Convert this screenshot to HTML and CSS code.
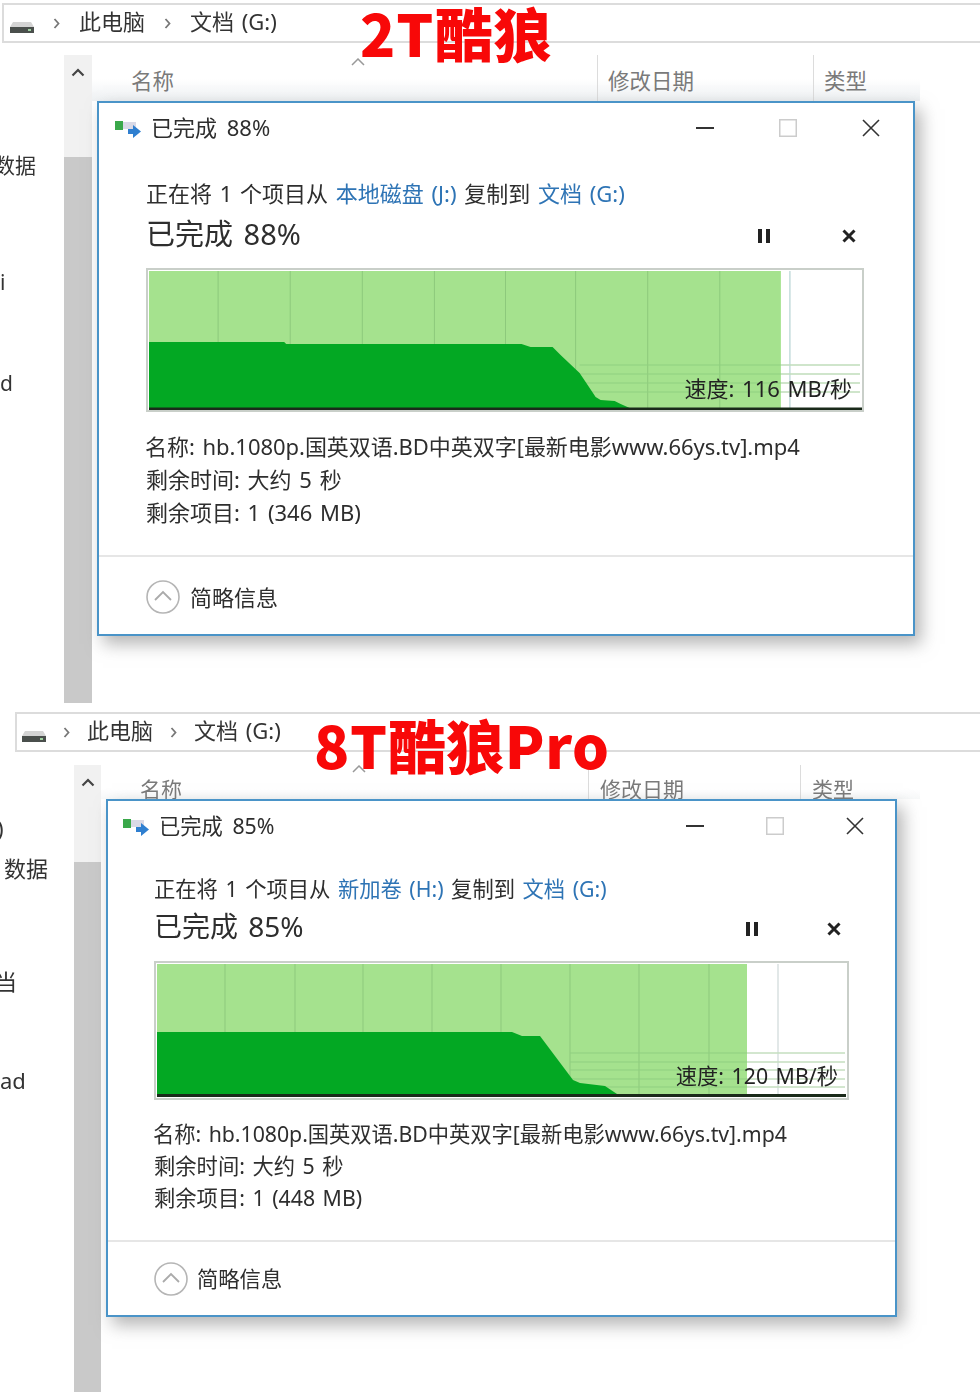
FILE: index.html
```html
<!DOCTYPE html>
<html lang="zh-CN">
<head>
<meta charset="utf-8">
<title>2T酷狼 / 8T酷狼Pro</title>
<link rel="stylesheet" href="styles.css">
</head>
<body>
<section class="shot shot-a">
  <div class="addr">
    <svg class="drive" viewBox="0 0 24 11"><path d="M3 0h18l3 5H0z" fill="#d4d4d4"/><rect y="5" width="24" height="6" fill="#4a4f4c"/><rect x="18" y="7" width="3" height="2" fill="#9fd0a0"/></svg>
    <svg class="crumb" viewBox="0 0 7 11"><path d="M1.500 1l4 4.500-4 4.500" fill="none" stroke="#777" stroke-width="1.800"/></svg>
    <span class="addr-text">此电脑</span>
    <svg class="crumb" viewBox="0 0 7 11"><path d="M1.500 1l4 4.500-4 4.500" fill="none" stroke="#777" stroke-width="1.800"/></svg>
    <span class="addr-text">文档 (G:)</span>
  </div>
  <div class="explorer">
    <div class="nav">
      <span class="nav-item n1">数据</span>
      <span class="nav-item n2">i</span>
      <span class="nav-item n3">d</span>
    </div>
    <div class="scroll">
      <div class="scroll-track"><svg class="scroll-up" viewBox="0 0 14 9"><path d="M1.500 7.500L7 2l5.500 5.500" fill="none" stroke="#444" stroke-width="2.200"/></svg></div>
      <div class="scroll-thumb"></div>
    </div>
    <div class="columns">
      <span class="col col-name">名称</span>
      <span class="col col-date">修改日期</span>
      <span class="col col-type">类型</span>
    </div>
  </div>
  <svg class="sort" viewBox="0 0 14 8"><path d="M1 7l6-6 6 6" fill="none" stroke="#999" stroke-width="1.500"/></svg>
  <h1 class="label">2T酷狼</h1>

  <div class="dialog">
    <div class="titlebar">
      <svg class="copy" viewBox="0 0 26 19"><rect y="2" width="8" height="9" fill="#3aa84a"/><path d="M8 3h13v7H8z" fill="#d9d9e6"/><path d="M13 10h5V6l8 6.500-8 6.500v-4h-5z" fill="#2f7fd0"/></svg>
      <span class="title-text">已完成 88%</span>
      <div class="controls">
        <svg class="ctl" viewBox="0 0 18 18"><path d="M0 9h18" stroke="#333" stroke-width="2"/></svg>
        <svg class="ctl" viewBox="0 0 18 18"><rect x=".75" y=".75" width="16.500" height="16.500" fill="none" stroke="#ccc" stroke-width="1.500"/></svg>
        <svg class="ctl" viewBox="0 0 18 18"><path d="M1 1l16 16M17 1L1 17" stroke="#333" stroke-width="1.600"/></svg>
      </div>
    </div>
    <p class="from">正在将 1 个项目从 <a class="link">本地磁盘 (J:)</a> 复制到 <a class="link">文档 (G:)</a></p>
    <div class="heading">
      <span class="heading-text">已完成 88%</span>
      <div class="actions">
        <svg class="act" viewBox="0 0 14 14"><path d="M1 0h4v14H1zM9 0h4v14H9z" fill="#222"/></svg>
        <svg class="act" viewBox="0 0 14 14"><path d="M1.500 1.500l11 11M12.500 1.500l-11 11" stroke="#222" stroke-width="3"/></svg>
      </div>
    </div>
    <div class="graph">
      <svg class="chart" viewBox="0 0 713 140" preserveAspectRatio="none">
        <rect x="1" y="1" width="631" height="137" fill="#a5e28e"/>
        <path d="M70 1v137M142 1v137M214 1v137M286 1v137M357 1v137M427 1v137M499 1v137M571 1v137" stroke="#8dc97c" stroke-width="1"/>
        <path d="M641 1v137" stroke="#c4dcdc" stroke-width="1.500"/>
        <path d="M431 95H711M431 104H711M431 113H711M431 122H711" stroke="#8fcf80" stroke-width="1"/>
        <path d="M632 95H711M632 104H711M632 113H711M632 122H711" stroke="#d8e4d8" stroke-width="1"/>
        <path d="M1 72H136L138 74H373L382 77H404L412 85L431 103L447 127L452 130L466 131L472 134L481 138H1z" fill="#03a823"/>
        <rect x="1" y="137.500" width="712" height="2.500" fill="#1a2a1a"/>
      </svg>
      <span class="speed">速度: 116 MB/秒</span>
    </div>
    <div class="info">
      <p>名称: hb.1080p.国英双语.BD中英双字[最新电影www.66ys.tv].mp4</p>
      <p>剩余时间: 大约 5 秒</p>
      <p>剩余项目: 1 (346 MB)</p>
    </div>
    <div class="footer">
      <svg class="toggle" viewBox="0 0 34 34"><circle cx="17" cy="17" r="16" fill="#fff" stroke="#b5b5b5" stroke-width="1.600"/><path d="M9 20l8-8 8 8" fill="none" stroke="#aaa" stroke-width="1.800"/></svg>
      <span class="footer-text">简略信息</span>
    </div>
  </div>
</section>

<section class="shot shot-b">
  <div class="addr">
    <svg class="drive" viewBox="0 0 24 11"><path d="M3 0h18l3 5H0z" fill="#d4d4d4"/><rect y="5" width="24" height="6" fill="#4a4f4c"/><rect x="18" y="7" width="3" height="2" fill="#9fd0a0"/></svg>
    <svg class="crumb" viewBox="0 0 7 11"><path d="M1.500 1l4 4.500-4 4.500" fill="none" stroke="#777" stroke-width="1.800"/></svg>
    <span class="addr-text">此电脑</span>
    <svg class="crumb" viewBox="0 0 7 11"><path d="M1.500 1l4 4.500-4 4.500" fill="none" stroke="#777" stroke-width="1.800"/></svg>
    <span class="addr-text">文档 (G:)</span>
  </div>
  <div class="explorer">
    <div class="nav">
      <span class="nav-item n0">)</span>
      <span class="nav-item n1">数据</span>
      <span class="nav-item n2">当</span>
      <span class="nav-item n3">ad</span>
    </div>
    <div class="scroll">
      <div class="scroll-track"><svg class="scroll-up" viewBox="0 0 14 9"><path d="M1.500 7.500L7 2l5.500 5.500" fill="none" stroke="#444" stroke-width="2.200"/></svg></div>
      <div class="scroll-thumb"></div>
    </div>
    <div class="columns">
      <span class="col col-name">名称</span>
      <span class="col col-date">修改日期</span>
      <span class="col col-type">类型</span>
    </div>
  </div>
  <svg class="sort" viewBox="0 0 14 8"><path d="M1 7l6-6 6 6" fill="none" stroke="#999" stroke-width="1.500"/></svg>
  <h1 class="label">8T酷狼Pro</h1>

  <div class="dialog">
    <div class="titlebar">
      <svg class="copy" viewBox="0 0 26 19"><rect y="2" width="8" height="9" fill="#3aa84a"/><path d="M8 3h13v7H8z" fill="#d9d9e6"/><path d="M13 10h5V6l8 6.500-8 6.500v-4h-5z" fill="#2f7fd0"/></svg>
      <span class="title-text">已完成 85%</span>
      <div class="controls">
        <svg class="ctl" viewBox="0 0 18 18"><path d="M0 9h18" stroke="#333" stroke-width="2"/></svg>
        <svg class="ctl" viewBox="0 0 18 18"><rect x=".75" y=".75" width="16.500" height="16.500" fill="none" stroke="#ccc" stroke-width="1.500"/></svg>
        <svg class="ctl" viewBox="0 0 18 18"><path d="M1 1l16 16M17 1L1 17" stroke="#333" stroke-width="1.600"/></svg>
      </div>
    </div>
    <p class="from">正在将 1 个项目从 <a class="link">新加卷 (H:)</a> 复制到 <a class="link">文档 (G:)</a></p>
    <div class="heading">
      <span class="heading-text">已完成 85%</span>
      <div class="actions">
        <svg class="act" viewBox="0 0 14 14"><path d="M1 0h4v14H1zM9 0h4v14H9z" fill="#222"/></svg>
        <svg class="act" viewBox="0 0 14 14"><path d="M1.500 1.500l11 11M12.500 1.500l-11 11" stroke="#222" stroke-width="3"/></svg>
      </div>
    </div>
    <div class="graph">
      <svg class="chart" viewBox="0 0 691 135" preserveAspectRatio="none">
        <rect x="1" y="1" width="590" height="130" fill="#a5e28e"/>
        <path d="M69 1v130M139 1v130M207 1v130M276 1v130M345 1v130M414 1v130M483 1v130M553 1v130" stroke="#8dc97c" stroke-width="1"/>
        <path d="M622 1v130" stroke="#d8e0e0" stroke-width="1.500"/>
        <path d="M414 90H689M414 99H689M414 107H689M414 116H689M414 124H689" stroke="#8fcf80" stroke-width="1"/>
        <path d="M591 90H689M591 99H689M591 107H689M591 116H689M591 124H689" stroke="#dfe6df" stroke-width="1"/>
        <path d="M1 69H356L366 73H384L417 117L424 120L449 123L461 131H1z" fill="#03a823"/>
        <rect x="1" y="131" width="689" height="3" fill="#1a2a1a"/>
      </svg>
      <span class="speed">速度: 120 MB/秒</span>
    </div>
    <div class="info">
      <p>名称: hb.1080p.国英双语.BD中英双字[最新电影www.66ys.tv].mp4</p>
      <p>剩余时间: 大约 5 秒</p>
      <p>剩余项目: 1 (448 MB)</p>
    </div>
    <div class="footer">
      <svg class="toggle" viewBox="0 0 34 34"><circle cx="17" cy="17" r="16" fill="#fff" stroke="#b5b5b5" stroke-width="1.600"/><path d="M9 20l8-8 8 8" fill="none" stroke="#aaa" stroke-width="1.800"/></svg>
      <span class="footer-text">简略信息</span>
    </div>
  </div>
</section>
</body>
</html>
```

FILE: styles.css
```css
* { box-sizing: border-box; }

html, body { margin: 0; padding: 0; background: #fff; }

body {
  font-family: "Noto Sans", "Noto Sans CJK SC", sans-serif;
  color: #2e2e2e;
  overflow: hidden;
  word-spacing: 2px;
}

p, h1 { margin: 0; font-weight: 400; }

.shot {
  position: relative;
  overflow: hidden;
  display: flex;
  flex-direction: column;
}

.shot-a { height: 703px; padding: 3px 0 0 2px; --gap: 19px; }
.shot-b { height: 689px; padding: 9px 0 0 15px; --gap: 17px; }

/* the reference is a soft, upscaled photo of a screen */
.addr, .explorer, .dialog { filter: blur(.4px); }

/* address bar */
.addr {
  display: flex;
  align-items: center;
  gap: var(--gap);
  height: 40px;
  border: 2px solid #dcdcdc;
  border-right: 0;
  font-size: 22px;
  color: #333;
}
.shot-a .addr { padding: 0 0 0 6px; }
.shot-b .addr { padding: 0 0 0 5px; }
.addr-text { margin-bottom: 6px; }
.drive { width: 24px; height: 11px; margin-top: 8px; }
.crumb { width: 7px; height: 11px; }

/* explorer behind the dialog */
.explorer { display: flex; flex: 1; min-height: 0; }
.shot-a .explorer { margin: 12px 0 0 -2px; }
.shot-b .explorer { margin: 13px 0 0 -15px; }

.nav {
  display: grid;
  overflow: hidden;
  font-size: 21px;
  color: #333;
}
.shot-a .nav { width: 64px; grid-template-rows: 124px 117px 101px 1fr; }
.shot-b .nav { width: 74px; grid-template-rows: 77px 40px 113px 99px 1fr; font-size: 22px; }
.nav-item { align-self: end; line-height: 28px; justify-self: start; }
.shot-a .n1 { margin-left: -6px; }
.shot-b .n0 { margin-left: -3px; }
.shot-b .n1 { margin-left: 4px; }
.shot-b .n2 { margin-left: -5px; }

.scroll { display: flex; flex-direction: column; width: 28px; }
.shot-b .scroll { width: 27px; }
.scroll-track {
  display: flex;
  justify-content: center;
  padding-top: 13px;
  background: #f1f1f1;
}
.shot-a .scroll-track { height: 102px; }
.shot-b .scroll-track { height: 97px; }
.scroll-up { width: 14px; height: 9px; }
.scroll-thumb { flex: 1; background: #c9c9c9; }

.columns {
  display: flex;
  flex: 1;
  margin-right: 60px;
  font-size: 21.500px;
  color: #7a7a7a;
  background: linear-gradient(#fff 0, #fff 24px, #eef1f3 46px);
}
.shot-a .columns { height: 46px; padding: 0 0 0 39px; }
.shot-b .columns { height: 34px; padding: 0 0 0 39px; font-size: 21px; }
.col { line-height: 30px; }
.shot-a .col { padding-top: 11px; }
.shot-b .col { padding-top: 9px; }
.col-date, .col-type { border-left: 1px solid #dcdcdc; padding-left: 10px; }
.shot-b .col-date, .shot-b .col-type { padding-left: 11px; }
.shot-a .col-name { width: 466px; }
.shot-a .col-date { width: 216px; }
.shot-b .col-name { width: 448px; }
.shot-b .col-date { width: 212px; }

.sort { position: absolute; width: 14px; height: 8px; }
.shot-a .sort { left: 351px; top: 58px; }
.shot-b .sort { left: 352px; top: 62px; }

/* red captions over the screenshots */
.label {
  position: absolute;
  color: #f80808;
  font-family: "Noto Sans CJK SC", sans-serif;
  font-weight: 900;
  white-space: nowrap;
  line-height: 60px;
  word-spacing: 0;
}
.shot-a .label { left: 360px; top: 2px; font-size: 58px; letter-spacing: 1px; }
.shot-b .label { left: 314px; top: 11px; font-size: 58px; letter-spacing: .6px; }

/* copy dialog */
.dialog {
  position: absolute;
  display: flex;
  flex-direction: column;
  background: #fff;
  border: 2px solid #4a94c8;
  box-shadow: 6px 8px 16px rgba(120, 120, 120, .55);
}
.shot-a .dialog {
  left: 97px; top: 101px; width: 818px; height: 535px;
  --body-l: 47px; --graph-r: 49px;
  font-size: 22px; --lh: 33px;
}
.shot-b .dialog {
  left: 106px; top: 96px; width: 791px; height: 518px;
  --body-l: 46px; --graph-r: 46px;
  font-size: 21.300px; --lh: 32px;
}

.titlebar { display: flex; align-items: center; height: 50px; flex: none; }
.shot-a .titlebar { padding: 0 33px 0 16px; }
.shot-b .titlebar { padding: 0 31px 0 15px; }
.copy { width: 26px; height: 19px; margin-right: 10px; }
.title-text { margin-bottom: 4px; word-spacing: 4px; }
.controls { display: flex; margin-left: auto; }
.shot-a .controls { gap: 65px; }
.shot-b .controls { gap: 62px; }
.ctl { width: 18px; height: 18px; }

.from {
  line-height: var(--lh);
  padding-left: var(--body-l);
  white-space: nowrap;
}
.shot-a .from { margin-top: 24px; }
.shot-b .from { margin-top: 22px; }
.link { color: #2e74b5; }

.heading {
  display: flex;
  align-items: center;
  height: 40px;
  flex: none;
  padding: 0 calc(var(--graph-r) + 8px) 0 var(--body-l);
}
.shot-a .heading { margin-top: 4px; font-size: 29px; }
.shot-b .heading { margin-top: 2px; font-size: 28px; }
.heading-text { margin-bottom: 4px; word-spacing: 3px; }
.actions { display: flex; margin-left: auto; margin-top: 4px; }
.shot-a .actions { gap: 71px; }
.shot-b .actions { gap: 68px; }
.act { width: 14px; height: 14px; }

.graph {
  position: relative;
  flex: none;
  margin: 14px var(--graph-r) 0 var(--body-l);
  border: 2px solid #c9cfc9;
}
.shot-a .graph { height: 144px; }
.shot-b .graph { height: 139px; }
.chart { display: block; width: 100%; height: 100%; }
.speed { position: absolute; white-space: nowrap; color: #222; }
.shot-a .speed { right: 10px; bottom: 7px; }
.shot-b .speed { right: 9px; bottom: 8px; }

.info {
  margin-top: 18px;
  padding-left: var(--body-l);
  line-height: var(--lh);
  white-space: nowrap;
  flex: none;
}
.info p:first-child { margin-left: -1px; letter-spacing: -.04px; }

.footer {
  display: flex;
  align-items: center;
  gap: 10px;
  flex: 1;
  margin-top: 26px;
  padding: 3px 0 0 var(--body-l);
  border-top: 2px solid #e6e6e6;
}
.shot-b .footer { padding-top: 0; gap: 9px; }
.footer-text { margin-bottom: 2px; }
.toggle { width: 34px; height: 34px; flex: none; }
```
